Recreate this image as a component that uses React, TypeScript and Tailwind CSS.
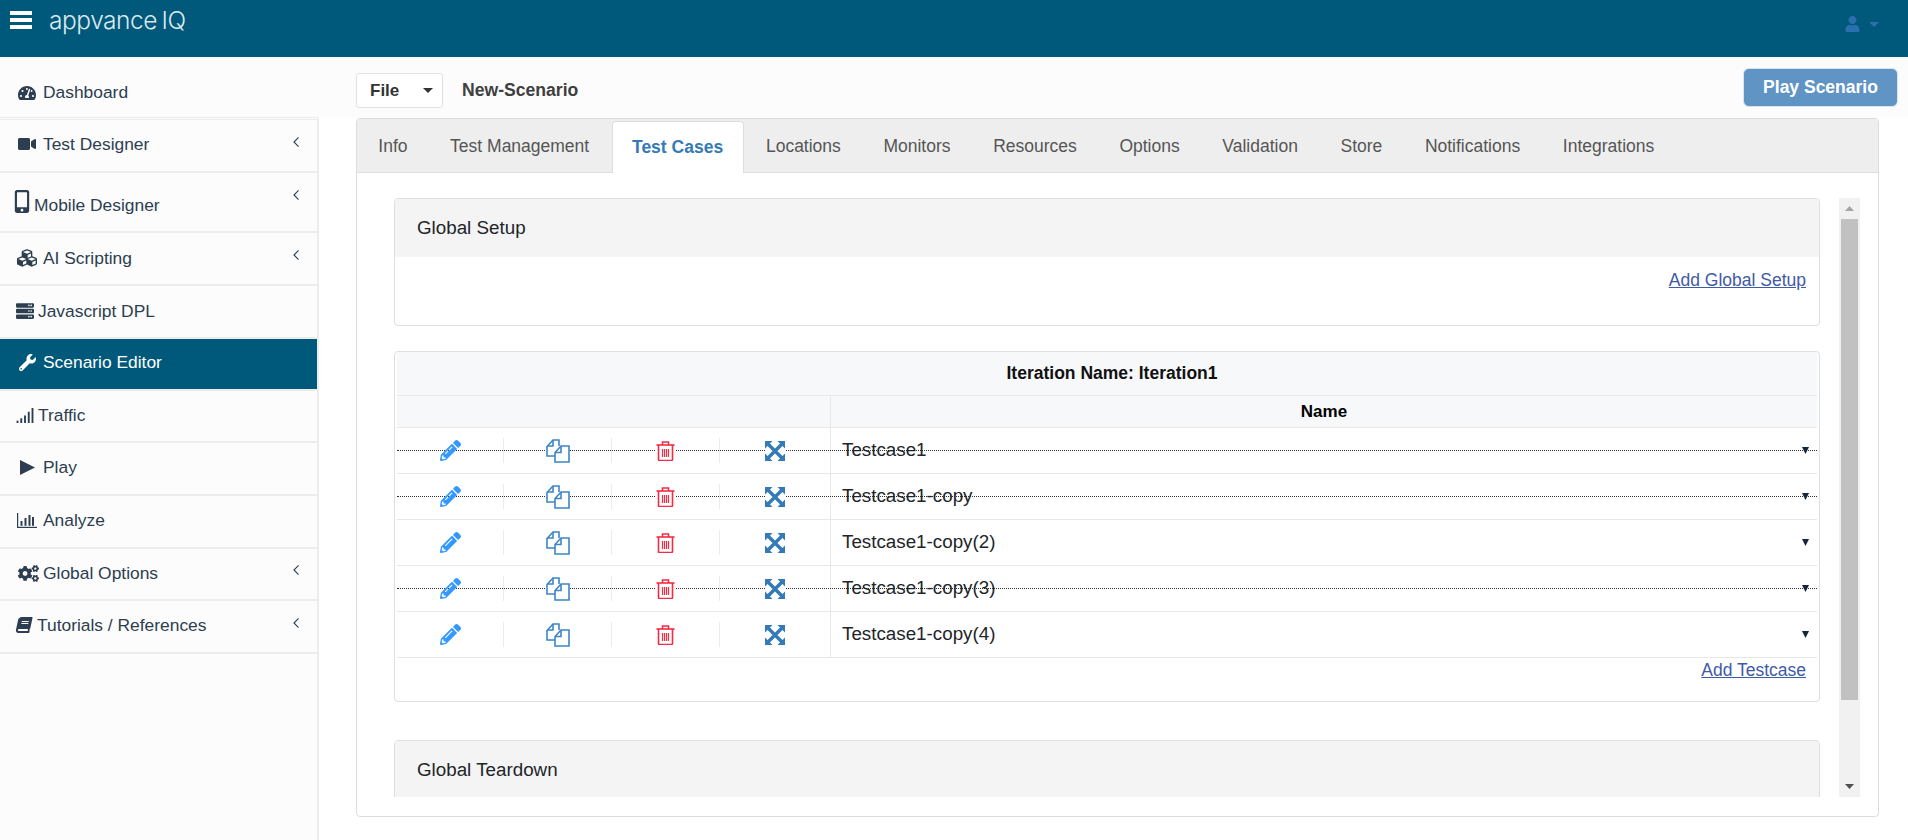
import React from "react";
import {
  FaTachometerAlt, FaVideo, FaMobileAlt, FaCubes, FaServer, FaWrench, FaCogs, FaBook,
  FaPencilAlt, FaUser,
} from "react-icons/fa";

const Signal = ({ className = "" }: { className?: string }) => (
  <svg viewBox="0 0 18 16" className={className} fill="currentColor">
    <rect x="0" y="13.5" width="2" height="2.5" /><rect x="4" y="11" width="2" height="5" />
    <rect x="8" y="8" width="2" height="8" /><rect x="12" y="4" width="2" height="12" /><rect x="16" y="0" width="2" height="16" />
  </svg>
);
const Bars = ({ className = "" }: { className?: string }) => (
  <svg viewBox="0 0 20 15" className={className} fill="currentColor">
    <rect x="0" y="0" width="1.2" height="15" /><rect x="0" y="13.8" width="20" height="1.2" />
    <rect x="3.5" y="8" width="2" height="4.8" /><rect x="7.5" y="5" width="2" height="7.8" />
    <rect x="11.5" y="2" width="2" height="10.8" /><rect x="15" y="4" width="2" height="8.8" />
  </svg>
);
const PlayTri = ({ className = "" }: { className?: string }) => (
  <svg viewBox="0 0 15 15" className={className} fill="currentColor"><path d="M0 0L15 7.5L0 15z" /></svg>
);
const Caret = ({ className = "" }: { className?: string }) => (
  <svg viewBox="0 0 10 5" className={className} fill="currentColor"><path d="M0 0h10L5 5z" /></svg>
);
const Chevron = ({ top }: { top: number }) => (
  <svg viewBox="0 0 7 11" style={{ marginTop: top }} className="w-[6.5px] h-[10px] absolute right-[18px] top-0 text-[#2c3e50]" fill="none" stroke="currentColor" strokeWidth="1.2">
    <path d="M6 0.5 L1 5.5 L6 10.5" />
  </svg>
);
const CopyIcon = () => (
  <svg viewBox="0 0 24 24" className="w-[24px] h-[24px] text-[#3d85c6] bg-white relative z-10" fill="none" stroke="currentColor" strokeWidth="1.6">
    <path d="M9 17H1V7.5L7 1h6v6" /><path d="M7 1v6H1" />
    <path d="M9 23V13.5L15 7h8v16z" /><path d="M15 7v6.5H9" />
  </svg>
);
const TrashIcon = () => (
  <svg viewBox="0 0 18 20" className="w-[19px] h-[20px] text-[#f02d45] bg-white relative z-10" fill="none" stroke="currentColor" strokeWidth="1.6">
    <path d="M0 4h18" /><path d="M6 4V1h6v3" /><path d="M2 4v14.5a1 1 0 0 0 1 1h12a1 1 0 0 0 1-1V4" />
    <path d="M6 8v8M8 8v8M10 8v8M12 8v8" strokeWidth="1.2" />
  </svg>
);
const ExpandIcon = () => (
  <svg viewBox="0 0 20 20" className="w-[20px] h-[20px] text-[#337ab7] relative z-10 bg-white" fill="currentColor">
    <path d="M0 0h7.5L0 7.5zM20 0v7.5L12.5 0zM0 20v-7.5L7.5 20zM20 20h-7.5L20 12.5z" />
    <path d="M3 3L17 17M17 3L3 17" stroke="currentColor" strokeWidth="3.4" fill="none" />
  </svg>
);

type Item = { label: string; icon: React.ReactNode; h: string; pt: string; pl: string; gap: string; chev?: number; active?: boolean };
const items: Item[] = [
  { label: "Test Designer", icon: <FaVideo className="w-[18px] h-[16px]" />, h: "h-[53px]", pt: "pt-[12px]", pl: "pl-[18px]", gap: "gap-[7px]", chev: 17 },
  { label: "Mobile Designer", icon: <FaMobileAlt className="w-[16px] h-[23px] -mt-[7px]" />, h: "h-[60px]", pt: "pt-[20px]", pl: "pl-[14px]", gap: "gap-[4px]", chev: 17 },
  { label: "AI Scripting", icon: <FaCubes className="w-[22px] h-[20px]" />, h: "h-[53px]", pt: "pt-[13px]", pl: "pl-[16px]", gap: "gap-[5px]", chev: 17 },
  { label: "Javascript DPL", icon: <FaServer className="w-[18px] h-[18px]" />, h: "h-[53px]", pt: "pt-[13px]", pl: "pl-[16px]", gap: "gap-[4px]" },
  { label: "Scenario Editor", icon: <FaWrench className="w-[17px] h-[17px]" />, h: "h-[52px]", pt: "pt-[11px]", pl: "pl-[19px]", gap: "gap-[7px]", active: true },
  { label: "Traffic", icon: <Signal className="w-[18px] h-[15px]" />, h: "h-[52px]", pt: "pt-[12px]", pl: "pl-[16px]", gap: "gap-[4px]" },
  { label: "Play", icon: <PlayTri className="w-[15px] h-[15px]" />, h: "h-[53px]", pt: "pt-[12px]", pl: "pl-[20px]", gap: "gap-[8px]" },
  { label: "Analyze", icon: <Bars className="w-[20px] h-[15px]" />, h: "h-[53px]", pt: "pt-[12px]", pl: "pl-[17px]", gap: "gap-[6px]" },
  { label: "Global Options", icon: <FaCogs className="w-[21px] h-[17px]" />, h: "h-[52px]", pt: "pt-[12px]", pl: "pl-[18px]", gap: "gap-[4px]", chev: 16 },
  { label: "Tutorials / References", icon: <FaBook className="w-[16px] h-[16px] -skew-x-12" />, h: "h-[53px]", pt: "pt-[12px]", pl: "pl-[16px]", gap: "gap-[5px]", chev: 17 },
];

const tabs = ["Info", "Test Management", "Test Cases", "Locations", "Monitors", "Resources", "Options", "Validation", "Store", "Notifications", "Integrations"];
const rows = [
  { name: "Testcase1", strike: true },
  { name: "Testcase1-copy", strike: true },
  { name: "Testcase1-copy(2)", strike: false },
  { name: "Testcase1-copy(3)", strike: true },
  { name: "Testcase1-copy(4)", strike: false },
];

function SideRow({ it }: { it: Item }) {
  return (
    <div className={`relative ${it.h} border-b-2 border-[#ececec] ${it.active ? "text-white" : "text-[#2c3e50]"}`}>
      <div className={`flex items-start h-full ${it.gap} ${it.pl} ${it.pt} ${it.active ? "bg-[#00597b]" : ""}`}>
        <span className="flex items-center justify-center shrink-0 h-[24px]">{it.icon}</span>
        <span className="text-[17.4px] leading-[24px]">{it.label}</span>
      </div>
      {it.chev !== undefined && <Chevron top={it.chev} />}
    </div>
  );
}

function Card({ title, children, className = "" }: { title: string; children?: React.ReactNode; className?: string }) {
  return (
    <div className={`border border-[#dfdfdf] rounded-[4px] overflow-hidden ${className}`}>
      <div className="h-[58px] bg-[#f4f4f4] flex items-center pl-[22px] pt-[1px] text-[18.8px] text-[#212529]">{title}</div>
      {children}
    </div>
  );
}

export default function App() {
  return (
    <div className="h-screen w-full overflow-hidden bg-white flex flex-col font-['Liberation_Sans',Arial,sans-serif]">
      <header className="h-[57px] shrink-0 bg-[#00597b] flex items-start relative">
        <div className="ml-[10px] mt-[11px] w-[22px] flex flex-col gap-[3px]">
          <span className="h-[4px] bg-white block" /><span className="h-[4px] bg-white block" /><span className="h-[4px] bg-white block" />
        </div>
        <span className="ml-[17px] mt-[5px] text-[24.5px] leading-[30px] font-['Inter',sans-serif] font-light tracking-[-0.45px] text-[#dbe9ee] [word-spacing:-2px]">appvance IQ</span>
        <div className="ml-auto mr-[29px] mt-[16px] flex items-center gap-[9px] text-[#2a70ae]">
          <FaUser className="w-[15px] h-[16px]" />
          <Caret className="w-[10px] h-[5px]" />
        </div>
      </header>

      <div className="h-[61px] shrink-0 bg-[#fcfcfc] flex">
        <div className="w-[318px] shrink-0 border-b border-[#ececec] flex items-center pl-[18px] gap-[7px] pt-[18px] pb-[7px] text-[#2c3e50]">
          <FaTachometerAlt className="w-[18px] h-[16px]" />
          <span className="text-[17.4px]">Dashboard</span>
        </div>
        <div className="flex-1 flex items-start pt-[16px] pl-[38px] pr-[10px]">
          <div className="h-[35px] w-[87px] bg-white border border-[#e2e2e2] rounded-[3px] flex items-center pl-[13px] pr-[9px] justify-between text-[#333]">
            <span className="font-bold text-[17px]">File</span>
            <Caret className="w-[10px] h-[5px]" />
          </div>
          <span className="ml-[19px] mt-[6px] font-bold text-[17.6px] leading-[22px] text-[#3f3f3f]">New-Scenario</span>
          <button className="ml-auto -mt-[5px] h-[39px] w-[155px] rounded-[6px] bg-[#5f94c5] border border-[#d8e4ef] text-white font-bold text-[17.5px]">Play Scenario</button>
        </div>
      </div>

      <div className="flex-1 flex min-h-0">
        <aside className="w-[319px] shrink-0 border-r-2 border-[#ececec] bg-[#fcfcfc] pt-px">
          <div className="border-t border-[#ececec]">
            {items.map((it) => <SideRow key={it.label} it={it} />)}
          </div>
        </aside>

        <main className="flex-1 min-w-0 pl-[37px] pr-[29px]">
          <div className="h-[699px] border border-[#dcdcdc] rounded-[4px] flex flex-col overflow-hidden">
            <div className="h-[54px] shrink-0 bg-[#eeeeee] border-b border-[#dddddd] flex items-end text-[#555] text-[17.5px]">
              {tabs.map((t) => (
                <div key={t} className={t === "Test Cases"
                  ? "h-[52px] -mb-px ml-[1px] mr-[1px] px-[19.5px] flex items-center bg-white border border-b-0 border-[#dddddd] rounded-t-[4px] font-bold text-[#337ab7]"
                  : "h-[52px] flex items-center px-[21.3px]"}>{t}</div>
              ))}
            </div>
            <div className="flex-1 min-h-0 pt-[25px] pb-[19px] pl-[37px] pr-[18px]">
              <div className="h-full flex gap-[19px]">
                <div className="flex-1 min-w-0 overflow-hidden">
                  <Card title="Global Setup" className="h-[128px]">
                    <div className="pt-[11px] pr-[13px] text-right text-[17.5px] leading-[24px]">
                      <a className="underline text-[#3f5aa6]">Add Global Setup</a>
                    </div>
                  </Card>

                  <div className="mt-[25px] h-[351px] border border-[#dfdfdf] rounded-[4px] pl-[2px] pr-[2px]">
                    <div className="h-[44px] bg-[#f7f8fa] border-b border-[#e8e8e8] flex items-center justify-center pl-[10px] font-bold text-[17.5px] text-[#111]">Iteration Name: Iteration1</div>
                    <div className="h-[32px] bg-[#f7f8fa] border-b border-[#e8e8e8] flex">
                      <div className="w-[434px] border-r border-[#e8e8e8]" />
                      <div className="flex-1 flex items-center justify-center font-bold text-[17px] text-black">Name</div>
                    </div>
                    {rows.map((r) => (
                      <div key={r.name} className="relative h-[46px] border-b border-[#e8e8e8] flex items-center">
                        {r.strike && <div className="absolute left-0 right-0 top-[22px] border-t border-dotted border-[#333]" />}
                        <div className="w-[434px] h-full border-r border-[#e8e8e8] flex items-center shrink-0">
                          <div className="w-[107px] h-[25px] border-r border-[#ececec] flex items-center justify-center"><FaPencilAlt className="w-[21px] h-[21px] text-[#3399ff] relative z-10" /></div>
                          <div className="w-[108px] h-[25px] border-r border-[#ececec] flex items-center justify-center"><CopyIcon /></div>
                          <div className="w-[108px] h-[25px] border-r border-[#ececec] flex items-center justify-center"><TrashIcon /></div>
                          <div className="flex-1 h-[25px] flex items-center justify-center"><ExpandIcon /></div>
                        </div>
                        <div className="relative flex-1 pl-[11px] pr-[8px] flex items-center justify-between text-[18.8px] text-[#212529]">
                          <span>{r.name}</span>
                          <svg viewBox="0 0 7 7" className="w-[7px] h-[7px] text-[#15263a] relative" fill="currentColor"><path d="M0 0h7L3.5 7z" /></svg>
                        </div>
                      </div>
                    ))}
                    <div className="pr-[11px] text-right text-[17.5px] leading-[24px]">
                      <a className="underline text-[#3f5aa6]">Add Testcase</a>
                    </div>
                  </div>

                  <Card title="Global Teardown" className="mt-[38px] h-[90px]" />
                </div>

                <div className="w-[21px] shrink-0 bg-[#f1f1f1] flex flex-col items-center relative">
                  <div className="h-[21px] flex items-center justify-center">
                    <svg viewBox="0 0 9 5" className="w-[9px] h-[5px] text-[#a3a3a3]" fill="currentColor"><path d="M4.5 0L9 5H0z" /></svg>
                  </div>
                  <div className="w-[17px] h-[481px] bg-[#c1c1c1]" />
                  <div className="mt-auto h-[21px] flex items-center justify-center">
                    <svg viewBox="0 0 9 5" className="w-[9px] h-[5px] text-[#505050]" fill="currentColor"><path d="M0 0h9L4.5 5z" /></svg>
                  </div>
                </div>
              </div>
            </div>
          </div>
        </main>
      </div>
    </div>
  );
}
